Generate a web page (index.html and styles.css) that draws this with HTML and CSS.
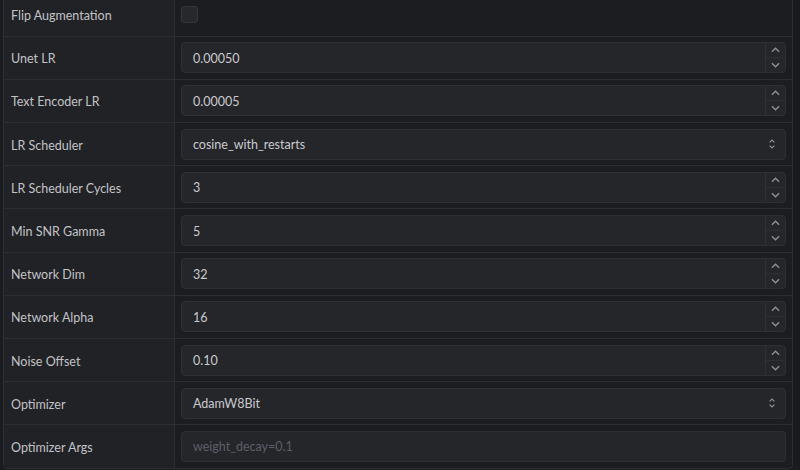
FILE: index.html
```html
<!DOCTYPE html>
<html>
<head>
<meta charset="utf-8">
<link rel="stylesheet" href="styles.css">
</head>
<body>
<div class="panel">
  <div class="row">
    <div class="label">Flip Augmentation</div>
    <div class="value"><span class="checkbox"></span></div>
  </div>
  <div class="row">
    <div class="label">Unet LR</div>
    <div class="value"><div class="input num"><div class="text">0.00050</div><div class="spin"><div class="up"><svg viewBox="0 0 10 6"><path d="M1 5 L5 1 L9 5"/></svg></div><div class="down"><svg viewBox="0 0 10 6"><path d="M1 1 L5 5 L9 1"/></svg></div></div></div></div>
  </div>
  <div class="row">
    <div class="label">Text Encoder LR</div>
    <div class="value"><div class="input num"><div class="text">0.00005</div><div class="spin"><div class="up"><svg viewBox="0 0 10 6"><path d="M1 5 L5 1 L9 5"/></svg></div><div class="down"><svg viewBox="0 0 10 6"><path d="M1 1 L5 5 L9 1"/></svg></div></div></div></div>
  </div>
  <div class="row">
    <div class="label">LR Scheduler</div>
    <div class="value"><div class="input select"><div class="text">cosine_with_restarts</div><svg class="updown" viewBox="0 0 10 14"><path d="M2 5 L5 2 L8 5 M2 9 L5 12 L8 9"/></svg></div></div>
  </div>
  <div class="row">
    <div class="label">LR Scheduler Cycles</div>
    <div class="value"><div class="input num"><div class="text">3</div><div class="spin"><div class="up"><svg viewBox="0 0 10 6"><path d="M1 5 L5 1 L9 5"/></svg></div><div class="down"><svg viewBox="0 0 10 6"><path d="M1 1 L5 5 L9 1"/></svg></div></div></div></div>
  </div>
  <div class="row">
    <div class="label">Min SNR Gamma</div>
    <div class="value"><div class="input num"><div class="text">5</div><div class="spin"><div class="up"><svg viewBox="0 0 10 6"><path d="M1 5 L5 1 L9 5"/></svg></div><div class="down"><svg viewBox="0 0 10 6"><path d="M1 1 L5 5 L9 1"/></svg></div></div></div></div>
  </div>
  <div class="row">
    <div class="label">Network Dim</div>
    <div class="value"><div class="input num"><div class="text">32</div><div class="spin"><div class="up"><svg viewBox="0 0 10 6"><path d="M1 5 L5 1 L9 5"/></svg></div><div class="down"><svg viewBox="0 0 10 6"><path d="M1 1 L5 5 L9 1"/></svg></div></div></div></div>
  </div>
  <div class="row">
    <div class="label">Network Alpha</div>
    <div class="value"><div class="input num"><div class="text">16</div><div class="spin"><div class="up"><svg viewBox="0 0 10 6"><path d="M1 5 L5 1 L9 5"/></svg></div><div class="down"><svg viewBox="0 0 10 6"><path d="M1 1 L5 5 L9 1"/></svg></div></div></div></div>
  </div>
  <div class="row">
    <div class="label">Noise Offset</div>
    <div class="value"><div class="input num"><div class="text">0.10</div><div class="spin"><div class="up"><svg viewBox="0 0 10 6"><path d="M1 5 L5 1 L9 5"/></svg></div><div class="down"><svg viewBox="0 0 10 6"><path d="M1 1 L5 5 L9 1"/></svg></div></div></div></div>
  </div>
  <div class="row">
    <div class="label">Optimizer</div>
    <div class="value"><div class="input select"><div class="text">AdamW8Bit</div><svg class="updown" viewBox="0 0 10 14"><path d="M2 5 L5 2 L8 5 M2 9 L5 12 L8 9"/></svg></div></div>
  </div>
  <div class="row last">
    <div class="label">Optimizer Args</div>
    <div class="value"><div class="input"><div class="text placeholder">weight_decay=0.1</div></div></div>
  </div>
</div>
</body>
</html>
```
FILE: styles.css
```css
html, body {
  margin: 0;
  padding: 0;
  background: #1a1b1e;
  overflow: hidden;
}
body {
  font-family: "Lato", "Liberation Sans", sans-serif;
  font-size: 12.5px;
  color: #c1c2c5;
  padding: 0 7px 0 3px;
}
.panel {
  margin-top: -7.5px;
  border: 1px solid #2c2e33;
  border-radius: 4px;
  overflow: hidden;
  background: #1c1d20;
}
.row {
  display: grid;
  grid-template-columns: 171px 1fr;
  height: 42.2px;
  border-bottom: 1px solid #2c2e33;
}
.row.last {
  border-bottom: none;
}
.label {
  display: flex;
  align-items: center;
  padding: 2px 0 0 7px;
  background: #212226;
  border-right: 1px solid #2c2e33;
  white-space: nowrap;
}
.value {
  display: flex;
  align-items: center;
  padding: 0 6px;
}
.checkbox {
  width: 15px;
  height: 15px;
  border: 1px solid #34363b;
  border-radius: 3px;
  background: #27282c;
}
.input {
  flex: 1;
  height: 29px;
  padding-left: 11px;
  border: 1px solid #2e3034;
  border-radius: 4px;
  background: #25262a;
  display: flex;
  align-items: center;
}
.text {
  flex: 1;
  padding-top: 1px;
  color: #c9cacd;
}
.placeholder {
  color: #5c5f66;
}
.spin {
  align-self: stretch;
  width: 19px;
  border-left: 1px solid #2e3034;
  display: flex;
  flex-direction: column;
}
.spin > div {
  flex: 1;
  display: flex;
  align-items: center;
  justify-content: center;
}
.spin .up {
  border-bottom: 1px solid #2e3034;
}
.spin svg {
  width: 9px;
  height: 6px;
  fill: none;
  stroke: #8f9196;
  stroke-width: 1.5;
}
.updown {
  width: 8px;
  height: 12px;
  margin-right: 9px;
  fill: none;
  stroke: #8f9196;
  stroke-width: 1.4;
}
```
